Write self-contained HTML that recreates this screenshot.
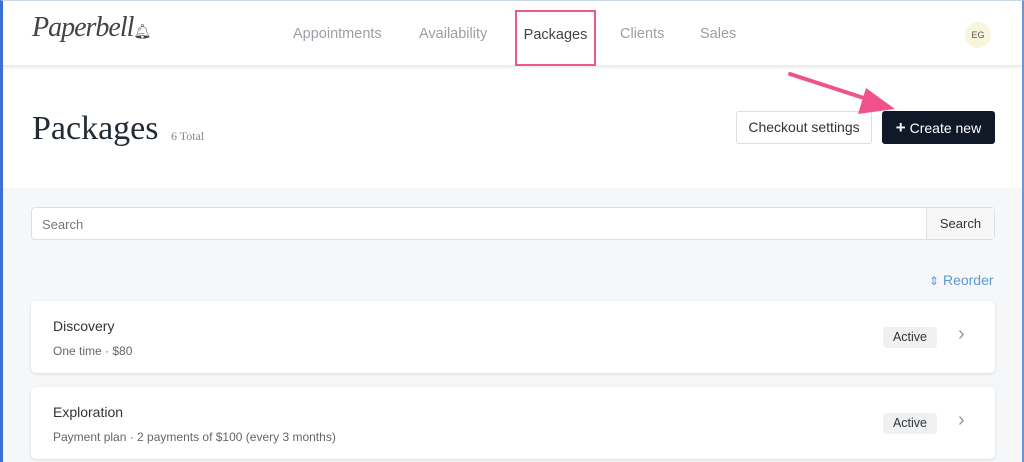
<!DOCTYPE html>
<html><head><style>
*{margin:0;padding:0;box-sizing:border-box}
body{width:1024px;height:462px;overflow:hidden;background:#f6f7f9;font-family:"Liberation Sans",sans-serif;position:relative;color:#222}
.frame{position:absolute;inset:0;border-left:3px solid #3d6fd6;border-top:1px solid #c9dbe8;border-right:2px solid #6f95d8;pointer-events:none;z-index:5}
.hdr{position:absolute;left:0;top:0;width:1024px;height:67px;background:#fff;border-bottom:2px solid #eceef0}
.logo{position:absolute;left:32px;top:12px;font-family:"Liberation Serif",serif;font-style:italic;font-size:28px;color:#444;letter-spacing:-1px}
.nav{position:absolute;top:26px;font-size:14.5px;color:#9aa0a6}
.pk{position:absolute;left:515px;top:10px;width:81px;height:56px;border:2px solid #ec5a8c;font-size:14.5px;color:#444;text-align:center;line-height:46px}
.eg{position:absolute;left:965px;top:22px;width:26px;height:26px;border-radius:50%;background:#f7f5dc;font-size:9px;color:#555;text-align:center;line-height:26px}
.top{position:absolute;left:0;top:69px;width:1024px;height:119px;background:#fff}
h1{position:absolute;left:32px;top:110px;font-family:"Liberation Serif",serif;font-weight:normal;font-size:34px;color:#222b36}
.tot{position:absolute;left:171px;top:129px;font-family:"Liberation Serif",serif;font-size:12px;color:#888}
.btn1{position:absolute;left:736px;top:111px;width:136px;height:33px;border:1px solid #ddd;border-radius:3px;background:#fff;font-size:14px;color:#333;text-align:center;line-height:31px}
.btn2{position:absolute;left:882px;top:111px;width:113px;height:33px;border-radius:3px;background:#111827;font-size:14px;color:#fff;text-align:center;line-height:33px}
.search{position:absolute;left:31px;top:207px;width:964px;height:33px;border:1px solid #dcdfe3;border-radius:4px;background:#fff}
.search span{position:absolute;left:10px;top:9px;font-size:13px;color:#777}
.search b{position:absolute;right:0;top:0;width:68px;height:31px;border-left:1px solid #dcdfe3;background:#f7f7f8;font-weight:normal;font-size:13px;color:#333;text-align:center;line-height:31px}
.reo{position:absolute;left:929px;top:272px;font-size:14px;color:#5a9ad6}
.card{position:absolute;left:31px;width:964px;height:72px;background:#fff;border-radius:5px;box-shadow:0 1px 3px rgba(0,0,0,.12)}
.card .t{position:absolute;left:22px;top:17px;font-size:14px;color:#333}
.card .s{position:absolute;left:22px;top:43px;font-size:12px;color:#666}
.card .a{position:absolute;left:852px;top:26px;width:54px;height:21px;background:#eef0f2;border-radius:4px;font-size:12.5px;color:#333;text-align:center;line-height:21px}
.card .c{position:absolute;left:927px;top:22px;font-size:20px;color:#999}
</style></head><body>
<div class="hdr">
<div class="logo">Paperbell<span style="font-style:normal;font-size:14px">🔔︎</span></div>
<div class="nav" style="left:293px">Appointments</div>
<div class="nav" style="left:419px">Availability</div>
<div class="pk">Packages</div>
<div class="nav" style="left:620px">Clients</div>
<div class="nav" style="left:700px">Sales</div>
<div class="eg">EG</div>
</div>
<div class="top"></div>
<h1>Packages</h1><div class="tot">6 Total</div>
<div class="btn1">Checkout settings</div>
<div class="btn2"><b style="font-size:17px">+</b> Create new</div>
<svg style="position:absolute;left:0;top:0;z-index:4" width="1024" height="200"><line x1="790" y1="74" x2="870" y2="100" stroke="#f0528a" stroke-width="4" stroke-linecap="round"/><polygon points="895,109 866,88 858,114" fill="#f0528a"/></svg>
<div class="search"><span>Search</span><b>Search</b></div>
<div class="reo"><span style="font-size:12px">⇕</span> Reorder</div>
<div class="card" style="top:301px"><div class="t">Discovery</div><div class="s">One time · $80</div><div class="a">Active</div><div class="c">›</div></div>
<div class="card" style="top:387px"><div class="t">Exploration</div><div class="s">Payment plan · 2 payments of $100 (every 3 months)</div><div class="a">Active</div><div class="c">›</div></div>
<div class="frame"></div>
</body></html>
